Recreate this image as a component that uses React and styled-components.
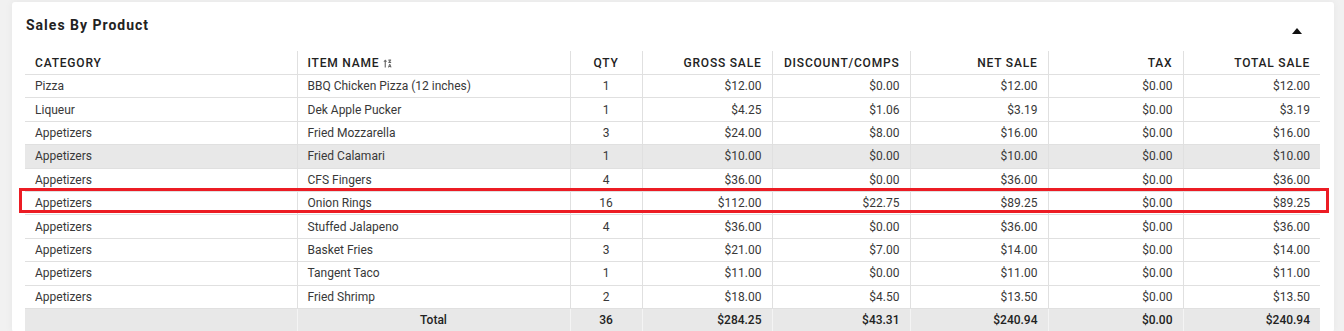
import React from "react";
import styled, { createGlobalStyle } from "styled-components";
import { FaSortAlphaUpAlt } from "react-icons/fa";

const GlobalStyle = createGlobalStyle`
  body {
    margin: 0;
    background: #f1f1f1;
    font-family: Roboto, "Liberation Sans", Arial, sans-serif;
    color: #383838;
  }
`;

const Page = styled.div`
  padding: 2px 10px 0 12px;
`;

const Card = styled.div`
  background: #fff;
  border-radius: 3px;
  padding: 0 14px 0 13px;
  box-shadow: 0 0 8px rgba(0, 0, 0, 0.05);
`;

const Header = styled.div`
  display: flex;
  align-items: center;
  justify-content: space-between;
  height: 49px;
  padding-left: 1px;
`;

const Title = styled.h3`
  margin: 0 0 3px;
  font-size: 14px;
  font-weight: 700;
  letter-spacing: 1px;
  color: #222;
`;

const Caret = styled.span`
  width: 0;
  height: 0;
  margin: 8px 18px 0 0;
  border-left: 5px solid transparent;
  border-right: 5px solid transparent;
  border-bottom: 6px solid #111;
`;

const TableWrap = styled.div`
  position: relative;
`;

const Table = styled.table`
  width: 1295px;
  border-collapse: collapse;
  table-layout: fixed;
  font-size: 12px;
`;

const Th = styled.th`
  height: 22px;
  padding: 1px 10px 0;
  font-size: 12px;
  font-weight: 500;
  letter-spacing: 0.8px;
  color: #222;
  text-align: ${(p) => p.$align || "left"};
  border-bottom: 1px solid #e0e0e0;
  border-left: ${(p) => (p.$first ? "none" : "1px solid #e0e0e0")};
  white-space: nowrap;
`;

const SortIcon = styled(FaSortAlphaUpAlt)`
  font-size: 9px;
  color: #666;
  margin-left: 4px;
  vertical-align: -1px;
`;

const Row = styled.tr`
  background: ${(p) => (p.$hover ? "#e8e8e8" : "#fff")};
`;

const Td = styled.td`
  height: 22.4px;
  padding: 0 10px;
  text-align: ${(p) => p.$align || "left"};
  border-bottom: 1px solid #e0e0e0;
  border-left: ${(p) => (p.$first ? "none" : "1px solid #e0e0e0")};
  white-space: nowrap;
`;

const TotalRow = styled.tr`
  background: #e8e8e8;
`;

const TotalTd = styled(Td)`
  height: 23px;
  font-weight: 500;
  color: #222;
  border-bottom: none;
  border-left: ${(p) => (p.$first ? "none" : "1px solid #f4f4f4")};
`;

const Highlight = styled.div`
  position: absolute;
  left: -6px;
  top: 137px;
  width: 1310px;
  height: 25px;
  box-sizing: border-box;
  border: 3px solid #ec1c24;
  pointer-events: none;
`;

const widths = [272, 273, 72, 130, 138, 138, 135, 137];

const columns = [
  { label: "CATEGORY", align: "left" },
  { label: "ITEM NAME", align: "left", sort: true },
  { label: "QTY", align: "center" },
  { label: "GROSS SALE", align: "right" },
  { label: "DISCOUNT/COMPS", align: "right" },
  { label: "NET SALE", align: "right" },
  { label: "TAX", align: "right" },
  { label: "TOTAL SALE", align: "right" },
];

const rows = [
  ["Pizza", "BBQ Chicken Pizza (12 inches)", "1", "$12.00", "$0.00", "$12.00", "$0.00", "$12.00"],
  ["Liqueur", "Dek Apple Pucker", "1", "$4.25", "$1.06", "$3.19", "$0.00", "$3.19"],
  ["Appetizers", "Fried Mozzarella", "3", "$24.00", "$8.00", "$16.00", "$0.00", "$16.00"],
  ["Appetizers", "Fried Calamari", "1", "$10.00", "$0.00", "$10.00", "$0.00", "$10.00"],
  ["Appetizers", "CFS Fingers", "4", "$36.00", "$0.00", "$36.00", "$0.00", "$36.00"],
  ["Appetizers", "Onion Rings", "16", "$112.00", "$22.75", "$89.25", "$0.00", "$89.25"],
  ["Appetizers", "Stuffed Jalapeno", "4", "$36.00", "$0.00", "$36.00", "$0.00", "$36.00"],
  ["Appetizers", "Basket Fries", "3", "$21.00", "$7.00", "$14.00", "$0.00", "$14.00"],
  ["Appetizers", "Tangent Taco", "1", "$11.00", "$0.00", "$11.00", "$0.00", "$11.00"],
  ["Appetizers", "Fried Shrimp", "2", "$18.00", "$4.50", "$13.50", "$0.00", "$13.50"],
];

const totals = ["", "Total", "36", "$284.25", "$43.31", "$240.94", "$0.00", "$240.94"];

export default function App() {
  return (
    <>
      <GlobalStyle />
      <Page>
        <Card>
          <Header>
            <Title>Sales By Product</Title>
            <Caret />
          </Header>
          <TableWrap>
            <Table>
              <colgroup>
                {widths.map((w, i) => (
                  <col key={i} style={{ width: w }} />
                ))}
              </colgroup>
              <thead>
                <tr>
                  {columns.map((c, i) => (
                    <Th key={c.label} $align={c.align} $first={i === 0}>
                      {c.label}
                      {c.sort && <SortIcon />}
                    </Th>
                  ))}
                </tr>
              </thead>
              <tbody>
                {rows.map((r, ri) => (
                  <Row key={ri} $hover={ri === 3}>
                    {r.map((v, i) => (
                      <Td key={i} $align={columns[i].align} $first={i === 0}>
                        {v}
                      </Td>
                    ))}
                  </Row>
                ))}
                <TotalRow>
                  {totals.map((v, i) => (
                    <TotalTd key={i} $align={i === 1 ? "center" : columns[i].align} $first={i === 0}>
                      {v}
                    </TotalTd>
                  ))}
                </TotalRow>
              </tbody>
            </Table>
            <Highlight />
          </TableWrap>
        </Card>
      </Page>
    </>
  );
}
